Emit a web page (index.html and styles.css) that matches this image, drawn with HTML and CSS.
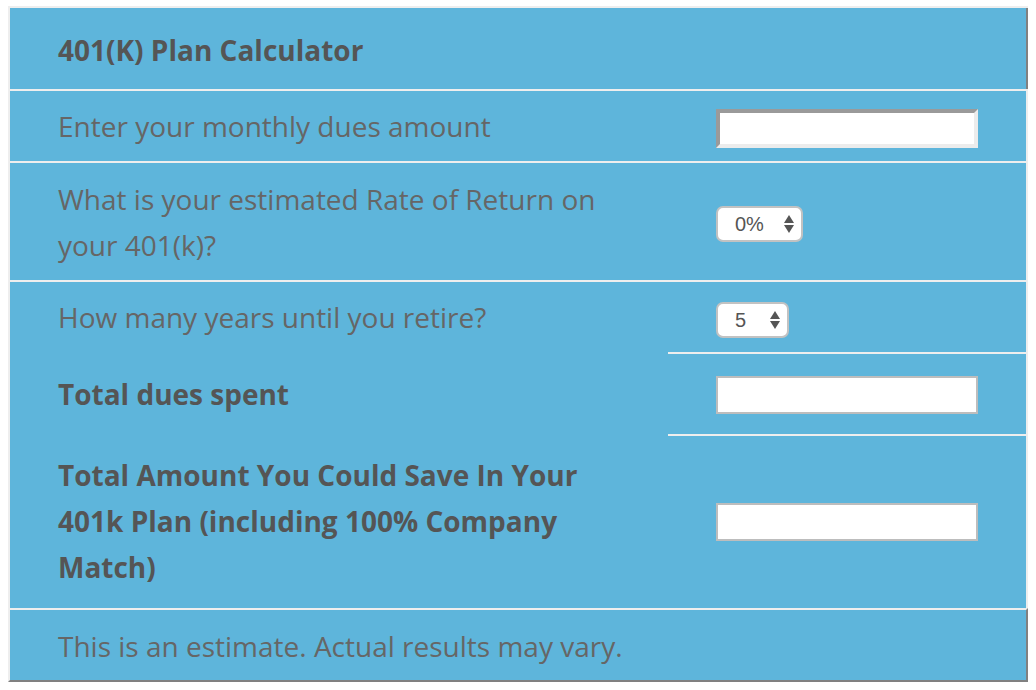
FILE: index.html
```html
<!DOCTYPE html>
<html lang="en">
<head>
<meta charset="utf-8">
<title>401(K) Plan Calculator</title>
<link rel="stylesheet" href="styles.css">
</head>
<body>
<div class="calc">
  <div class="row head">
    <div class="title">401(K) Plan Calculator</div>
  </div>
  <div class="row r-dues">
    <div class="label">Enter your monthly dues amount</div>
    <div class="ctrl"><input class="inp inset" type="text"></div>
  </div>
  <div class="row r-rate">
    <div class="label">What is your estimated Rate of Return on your 401(k)?</div>
    <div class="ctrl">
      <span class="sel sel-rate">
        <select class="select"><option>0%</option></select>
        <svg class="arrows" width="10" height="18" viewBox="0 0 10 18"><path d="M5 0 L10 8 L0 8 Z M0 10 L10 10 L5 18 Z" fill="#555"/></svg>
      </span>
    </div>
  </div>
  <div class="row r-years">
    <div class="label">How many years until you retire?</div>
    <div class="ctrl">
      <span class="sel sel-years">
        <select class="select"><option>5</option></select>
        <svg class="arrows" width="10" height="18" viewBox="0 0 10 18"><path d="M5 0 L10 8 L0 8 Z M0 10 L10 10 L5 18 Z" fill="#555"/></svg>
      </span>
    </div>
  </div>
  <div class="row split r-spent">
    <div class="label strong">Total dues spent</div>
    <div class="ctrl"><input class="inp plain" type="text"></div>
  </div>
  <div class="row split r-save">
    <div class="label strong">Total Amount You Could Save In Your 401k Plan (including 100% Company Match)</div>
    <div class="ctrl"><input class="inp plain" type="text"></div>
  </div>
  <div class="row foot">
    <div class="note">This is an estimate. Actual results may vary.</div>
  </div>
</div>
</body>
</html>
```
FILE: styles.css
```css
* { box-sizing: border-box; }

body {
  margin: 6px 8px;
  background: #ffffff;
  font-family: "Open Sans", "Liberation Sans", sans-serif;
}

.calc {
  width: 1020px;
  background: #5eb5db;
  border-left: 2px solid #eeeeee;
  border-top: 2px solid #eeeeee;
  border-bottom: 2px solid #808080;
  font-size: 28px;
  line-height: 46px;
  color: #666666;
}

.row {
  display: grid;
  grid-template-columns: 658px 1fr;
  border-top: 2px solid #eeeeee;
  border-right: 2px solid #eeeeee;
}

.row.head {
  display: block;
  border-top: none;
  border-right-color: #808080;
}

.row.foot {
  display: block;
  border-right-color: #808080;
}

.row.split {
  border-top: none;
}

.row.split .ctrl {
  border-top: 2px solid #eeeeee;
}

.title {
  padding: 19px 48px 16px;
  font-weight: 700;
  color: #555555;
}

.label {
  padding: 12px 48px;
}

.r-rate .label {
  padding: 13px 48px 12px;
}

.label.strong {
  font-weight: 700;
  color: #555555;
}

.r-spent .label {
  padding: 19px 48px 17px;
}

.r-save .label {
  padding: 18px 48px;
}

.note {
  padding: 13px 48px 11px;
}

.ctrl {
  display: flex;
  align-items: center;
  padding-left: 48px;
}

.inp {
  width: 262px;
  background: #ffffff;
  outline: none;
  margin: 0;
  padding: 0 6px;
  font: 18px "Liberation Sans", sans-serif;
}

.inp.inset {
  height: 39px;
  margin-top: 5px;
  border-style: solid;
  border-width: 4px;
  border-color: #9a9a9a #ececec #ececec #9a9a9a;
}

.inp.plain {
  height: 38px;
  border: 2px solid #bdbdbd;
}

.r-spent .inp.plain {
  margin-top: 2px;
}

.sel {
  position: relative;
  display: inline-block;
  line-height: normal;
}

.sel-rate { margin-top: 5px; }
.sel-years { margin-top: 6px; }

.select {
  -webkit-appearance: none;
  appearance: none;
  display: block;
  height: 36px;
  margin: 0;
  padding: 0 0 0 17px;
  border: 2px solid #c2c2c2;
  border-radius: 7px;
  background: #ffffff;
  color: #555555;
  font: 20px "Liberation Sans", sans-serif;
  outline: none;
}

.sel-rate .select { width: 87px; }
.sel-years .select { width: 73px; }

.arrows {
  position: absolute;
  right: 9px;
  top: 9px;
  pointer-events: none;
}
```
